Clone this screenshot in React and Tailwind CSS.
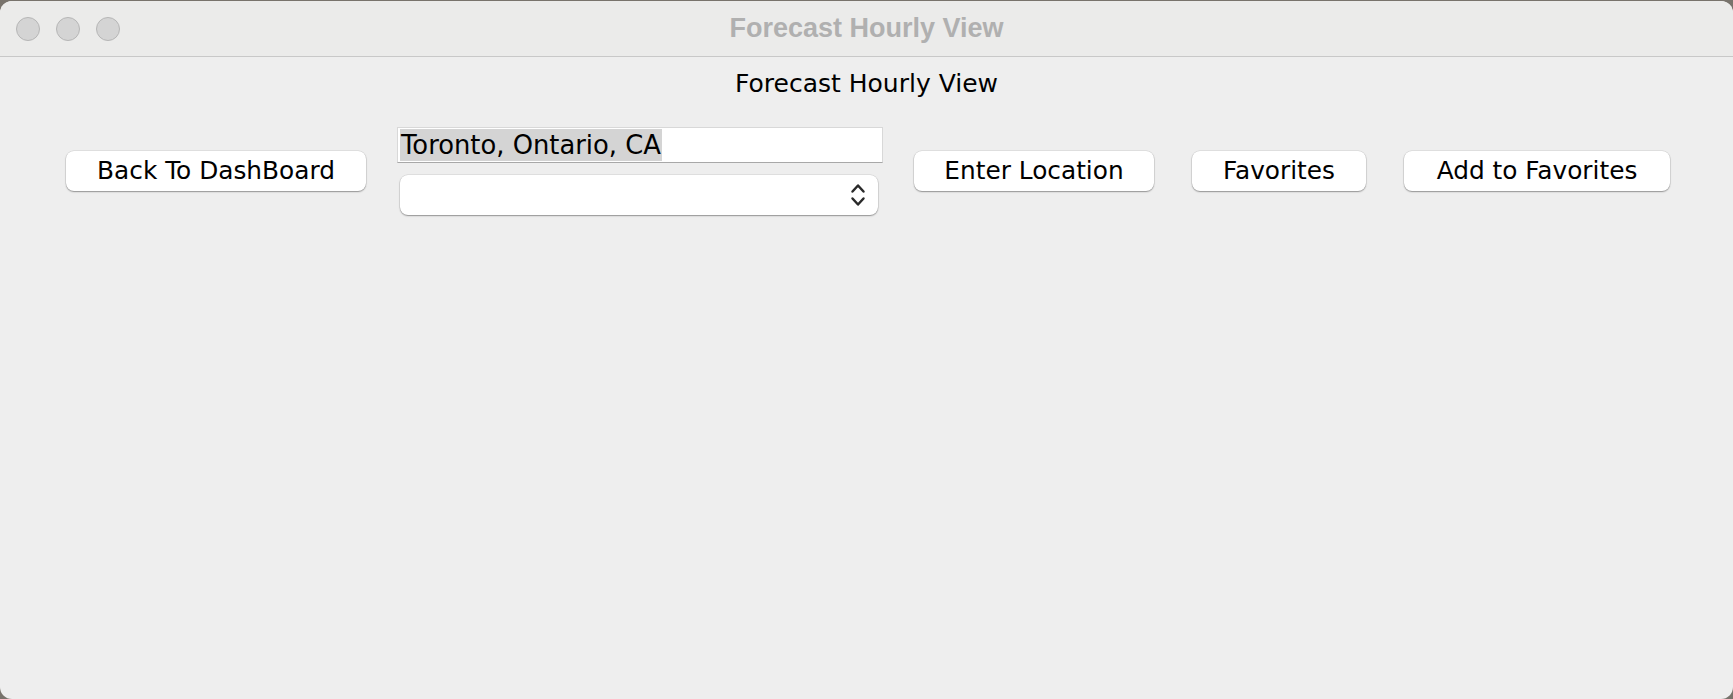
import React from "react";

const btn =
  "h-[40px] shrink-0 rounded-[8px] bg-white flex items-center justify-center text-black text-[24.8px] shadow-[0_1px_1.5px_rgba(0,0,0,0.35),0_0_0_0.5px_rgba(0,0,0,0.12)]";

export default function App() {
  return (
    <div className="w-[1733px] h-[699px] bg-[#78736c] pt-[1px] overflow-hidden">
      <div className="h-[698px] w-full rounded-[12px] overflow-hidden bg-[#eeeeee] flex flex-col" style={{ fontFamily: '"DejaVu Sans", sans-serif' }}>
        {/* Title bar */}
        <div className="h-[56px] shrink-0 bg-[#ebebea] relative flex items-center justify-center border-b border-[#c8c8c8]">
          <div className="absolute left-[16px] top-[16px] flex gap-[16px]">
            <div className="w-[24px] h-[24px] rounded-full bg-[#d4d4d4] border border-[#b6b6b6]" />
            <div className="w-[24px] h-[24px] rounded-full bg-[#d4d4d4] border border-[#b6b6b6]" />
            <div className="w-[24px] h-[24px] rounded-full bg-[#d4d4d4] border border-[#b6b6b6]" />
          </div>
          <div className="text-[27px] font-bold text-[#b0b0b0] leading-none" style={{ fontFamily: '"Liberation Sans", Arial, sans-serif' }}>
            Forecast Hourly View
          </div>
        </div>

        {/* Content */}
        <div className="flex flex-col pt-[12px]">
          <div className="text-center text-[25px] leading-[29px] text-black">Forecast Hourly View</div>

          <div className="mt-[28px] flex items-center pl-[66px]">
            <div className={btn + " w-[300px]"}>Back To DashBoard</div>

            <div className="ml-[31px] w-[486px] flex flex-col gap-[12px] pt-[1px]">
              <div className="h-[36px] bg-white border border-[#d8d8d8] border-b-[#a8a8a8] px-[2px] py-[1px] flex items-center">
                <span className="bg-[#d4d4d4] h-[32px] leading-[32px] text-[25.8px] text-black px-[1px]">Toronto, Ontario, CA</span>
              </div>
              <div className="ml-[3px] w-[478px] h-[40px] rounded-[8px] bg-white shadow-[0_1px_1.5px_rgba(0,0,0,0.35),0_0_0_0.5px_rgba(0,0,0,0.12)] flex items-center justify-end pr-[12px]">
                <svg width="16" height="24" viewBox="0 0 16 24" fill="none" stroke="#2a2a2a" strokeWidth="2.5" strokeLinecap="round" strokeLinejoin="round">
                  <path d="M2.5 8.5 L8 2.5 L13.5 8.5" />
                  <path d="M2.5 15.5 L8 21.5 L13.5 15.5" />
                </svg>
              </div>
            </div>

            <div className={btn + " ml-[31px] w-[240px]"}>Enter Location</div>
            <div className={btn + " ml-[38px] w-[174px]"}>Favorites</div>
            <div className={btn + " ml-[38px] w-[266px]"}>Add to Favorites</div>
          </div>
        </div>
      </div>
    </div>
  );
}
